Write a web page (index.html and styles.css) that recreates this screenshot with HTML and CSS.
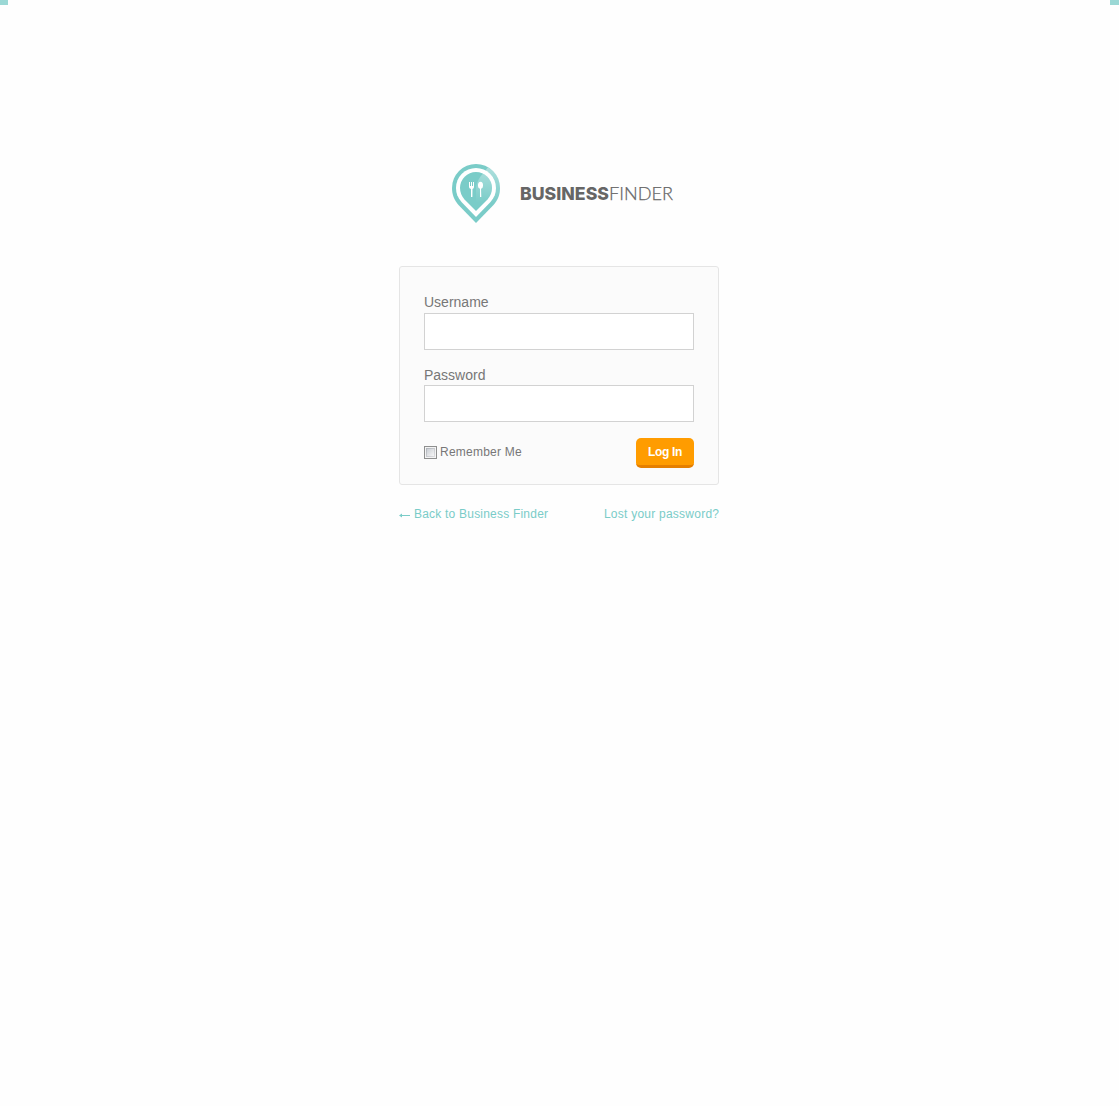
FILE: index.html
```html
<!DOCTYPE html>
<html lang="en">
<head>
<meta charset="utf-8">
<title>Business Finder › Log In</title>
<link rel="stylesheet" href="styles.css">
</head>
<body>
<div class="corners"><span class="corner"></span><span class="corner corner-right"></span></div>
<main class="login">
  <h1 class="brand">
    <svg class="pin" width="50" height="60" viewBox="0 0 50 60" aria-hidden="true">
      <defs>
        <linearGradient id="shine" gradientUnits="userSpaceOnUse" x1="38" y1="5" x2="36" y2="40"><stop offset="0" stop-color="#fff" stop-opacity=".38"/><stop offset="1" stop-color="#fff" stop-opacity="0"/></linearGradient>
      </defs>
      <path fill="#7accc8" d="M25 60 7.500 42C3 37 1 31 1 25A24 24 0 0 1 49 25C49 31 47 37 42.500 42Z"/>
      <path fill="url(#shine)" d="M37 4.200A24 24 0 0 1 49 25Q49 34 42.500 42L39 38Q45 32 45 25A20 20 0 0 0 34.500 7.500Z"/>
      <path fill="#fff" d="M25 54 10.500 39C6.500 34.500 5 30 5 25A20 20 0 0 1 45 25C45 30 43.500 34.500 39.500 39Z"/>
      <path fill="#7accc8" d="M25 48 13.500 36.500C10.500 33 9 29 9 25A16 16 0 0 1 41 25C41 29 39.500 33 36.500 36.500Z"/>
      <path fill="url(#shine)" d="M32 10.700A16 16 0 0 1 41 25C41 29 39.500 33 36.500 36.500L25 40V24Q27 15 32 10.700Z"/>
      <path fill="#fff" d="M18 19h1v4h1v-4h1v4h1v-4h1v5q0 1.700-1.500 2L21.400 34h-1.400V26Q18 25.700 18 24Z"/>
      <ellipse fill="#fff" cx="29.500" cy="22.200" rx="2.500" ry="3.500"/>
      <path fill="#fff" d="M29 24h1l.3 10h-1.300Z"/>
    </svg>
    <svg class="wordmark" width="154" height="20" viewBox="0 0 154 20">
      <text class="wordmark-bold" x="0" y="16" textLength="89" lengthAdjust="spacingAndGlyphs">BUSINESS</text>
      <text class="wordmark-light" x="89" y="16" textLength="64" lengthAdjust="spacingAndGlyphs">FINDER</text>
    </svg>
  </h1>
  <form class="card">
    <label class="field"><span class="label">Username</span><input class="input" type="text"></label>
    <label class="field"><span class="label">Password</span><input class="input" type="password"></label>
    <div class="actions">
      <label class="remember"><input class="check" type="checkbox"><span class="remember-text">Remember Me</span></label>
      <button class="submit" type="button"><span class="submit-text">Log In</span></button>
    </div>
  </form>
  <nav class="links">
    <a class="link back" href="#"><svg width="11" height="7" viewBox="0 0 11 7" aria-hidden="true"><path d="M0 3.500 3 1.500V3H11V4H3V5.500Z" fill="#7accc8"/></svg><span class="back-text">Back to Business Finder</span></a>
    <a class="link lost" href="#">Lost your password?</a>
  </nav>
</main>
</body>
</html>
```
FILE: styles.css
```css
* { box-sizing: border-box; }
body {
  margin: 0;
  min-height: 1106px;
  background: #fefefe;
  color: #777;
  font-family: "Liberation Sans", Arial, sans-serif;
}
.corners { display: flex; justify-content: space-between; height: 5px; }
.corner { width: 8px; background: #9bd8d5; }
.corner-right { width: 9px; }
.login { width: 320px; margin: 0 auto 0 399px; padding-top: 158px; }
.brand { display: flex; margin: 0; padding-left: 52px; height: 103px; }
.pin { flex: none; }
.wordmark { flex: none; margin: 21px 0 0 19px; overflow: visible; }
.wordmark-bold, .wordmark-light { font-size: 18px; fill: #666; }
.wordmark-bold { font-family: Inter, sans-serif; font-weight: 800; }
.wordmark-light { font-family: Lato, sans-serif; font-weight: 300; stroke: #666; stroke-width: .25px; }
.card {
  height: 219px;
  padding: 26px 24px 16px;
  border: 1px solid #e5e5e5;
  border-radius: 3px;
  background: #fbfbfb;
}
.field { display: block; height: 72px; }
.field + .field { padding-top: 1px; }
.label { display: block; height: 20px; font-size: 14px; line-height: 18px; }
.field + .field .label { height: 19px; }
.input {
  display: block;
  width: 270px;
  height: 37px;
  padding: 3px 8px;
  border: 1px solid #d2d2d2;
  background: #fff;
  font-size: 20px;
}
.actions { display: flex; justify-content: space-between; padding-top: 1px; }
.remember { display: flex; align-items: flex-start; font-size: 12px; line-height: 14px; }
.remember-text { margin: 7px 0 0 3px; letter-spacing: .24px; }
.check {
  appearance: none;
  width: 13px;
  height: 13px;
  margin: 8px 0 0;
  padding: 1px;
  border: 1px solid #8e8f8f;
  background:
    linear-gradient(135deg, #cbcfd5, #f6f6f6) center / 7px 7px no-repeat,
    linear-gradient(135deg, #aeb3b9, #e0e0e3) center / 9px 9px no-repeat,
    #f4f4f4;
}
.submit {
  width: 58px;
  height: 30px;
  padding: 1px 0 0;
  border: 0;
  border-bottom: 3px solid #e57f00;
  border-radius: 5px;
  background: #ff9c00;
  color: #fff;
  font: bold 12px/24px "Liberation Sans", Arial, sans-serif;
}
.submit-text { letter-spacing: -.3px; }
.links { display: flex; justify-content: space-between; padding-top: 22px; font-size: 12px; line-height: 14px; }
.link { color: #7accc8; text-decoration: none; white-space: nowrap; }
.back { display: flex; }
.back svg { margin: 5px 4px 0 0; }
.back-text { letter-spacing: .21px; }
.lost { letter-spacing: .24px; margin-right: -.24px; }
```
